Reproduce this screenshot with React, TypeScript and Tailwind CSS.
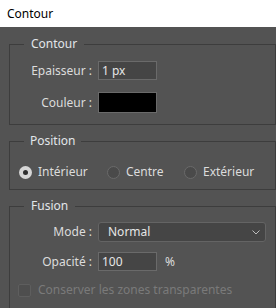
import React from "react";

const font = { fontFamily: '"Noto Sans", "Open Sans", sans-serif' };

function Radio({ checked }: { checked?: boolean }) {
  return checked ? (
    <span className="flex h-[13px] w-[13px] items-center justify-center rounded-full bg-[#d6d6d6]">
      <span className="h-[5px] w-[5px] rounded-full bg-[#2e2e2e]" />
    </span>
  ) : (
    <span className="h-[13px] w-[13px] rounded-full border border-[#6a6a6a] bg-[#4a4a4a]" />
  );
}

export default function App() {
  return (
    <div className="h-[308px] w-[276px] overflow-hidden bg-[#535353] text-[12px] leading-[16px] text-[#dcdcdc]" style={font}>
      <div className="flex h-[27px] items-center bg-white pl-[7px] text-black">Contour</div>
      <div className="flex flex-col gap-[8px] pl-[9px] pt-[9px]">
        <fieldset className="border border-[#3d3d3d] px-0 pb-[11px] pt-[9px]">
          <legend className="ml-[14px] px-[7px] text-[#e2e6ea]">Contour</legend>
          <div className="grid grid-cols-[82px_auto] items-center gap-x-[6px] gap-y-[12px]">
            <span className="text-right">Epaisseur :</span>
            <div className="flex h-[19px] w-[59px] items-center border border-[#6a6a6a] bg-[#454545] pl-[3px] text-[#e6e6e6]">1 px</div>
            <span className="text-right">Couleur :</span>
            <div className="h-[21px] w-[59px] border border-[#6a6a6a] bg-black" />
          </div>
        </fieldset>
        <fieldset className="border border-[#3d3d3d] px-0 pb-[9px] pt-[15px]">
          <legend className="ml-[14px] px-[6px] text-[#e2e6ea]">Position</legend>
          <div className="flex items-center pl-[9px]">
            <div className="flex w-[88px] items-center gap-[6px]">
              <Radio checked />
              <span>Intérieur</span>
            </div>
            <div className="flex w-[77px] items-center gap-[6px]">
              <Radio />
              <span>Centre</span>
            </div>
            <div className="flex items-center gap-[6px]">
              <Radio />
              <span>Extérieur</span>
            </div>
          </div>
        </fieldset>
        <fieldset className="border border-[#3d3d3d] px-0 pb-[20px] pt-[8px]">
          <legend className="ml-[14px] px-[7px] text-[#e2e6ea]">Fusion</legend>
          <div className="grid grid-cols-[82px_auto] items-center gap-x-[6px] gap-y-[10px]">
            <span className="text-right">Mode :</span>
            <div className="flex h-[20px] w-[168px] items-center justify-between rounded-[3px] border border-[#646464] bg-[#454545] pl-[9px] pr-[5px] text-[#e6e6e6]">
              <span>Normal</span>
              <svg width="8" height="5" viewBox="0 0 8 5" fill="none">
                <path d="M0.5 0.5 L4 4 L7.5 0.5" stroke="#bdbdbd" strokeWidth="1" />
              </svg>
            </div>
            <span className="text-right">Opacité :</span>
            <div className="flex items-center gap-[8px]">
              <div className="flex h-[19px] w-[59px] items-center border border-[#6a6a6a] bg-[#454545] pl-[3px] text-[#e6e6e6]">100</div>
              <span>%</span>
            </div>
          </div>
          <div className="mt-[11px] flex items-center gap-[7px] pl-[8px] text-[#7a7a7a]">
            <span className="h-[13px] w-[13px] rounded-[2px] border border-[#5e5e5e] bg-[#4e4e4e]" />
            <span>Conserver les zones transparentes</span>
          </div>
        </fieldset>
      </div>
    </div>
  );
}
